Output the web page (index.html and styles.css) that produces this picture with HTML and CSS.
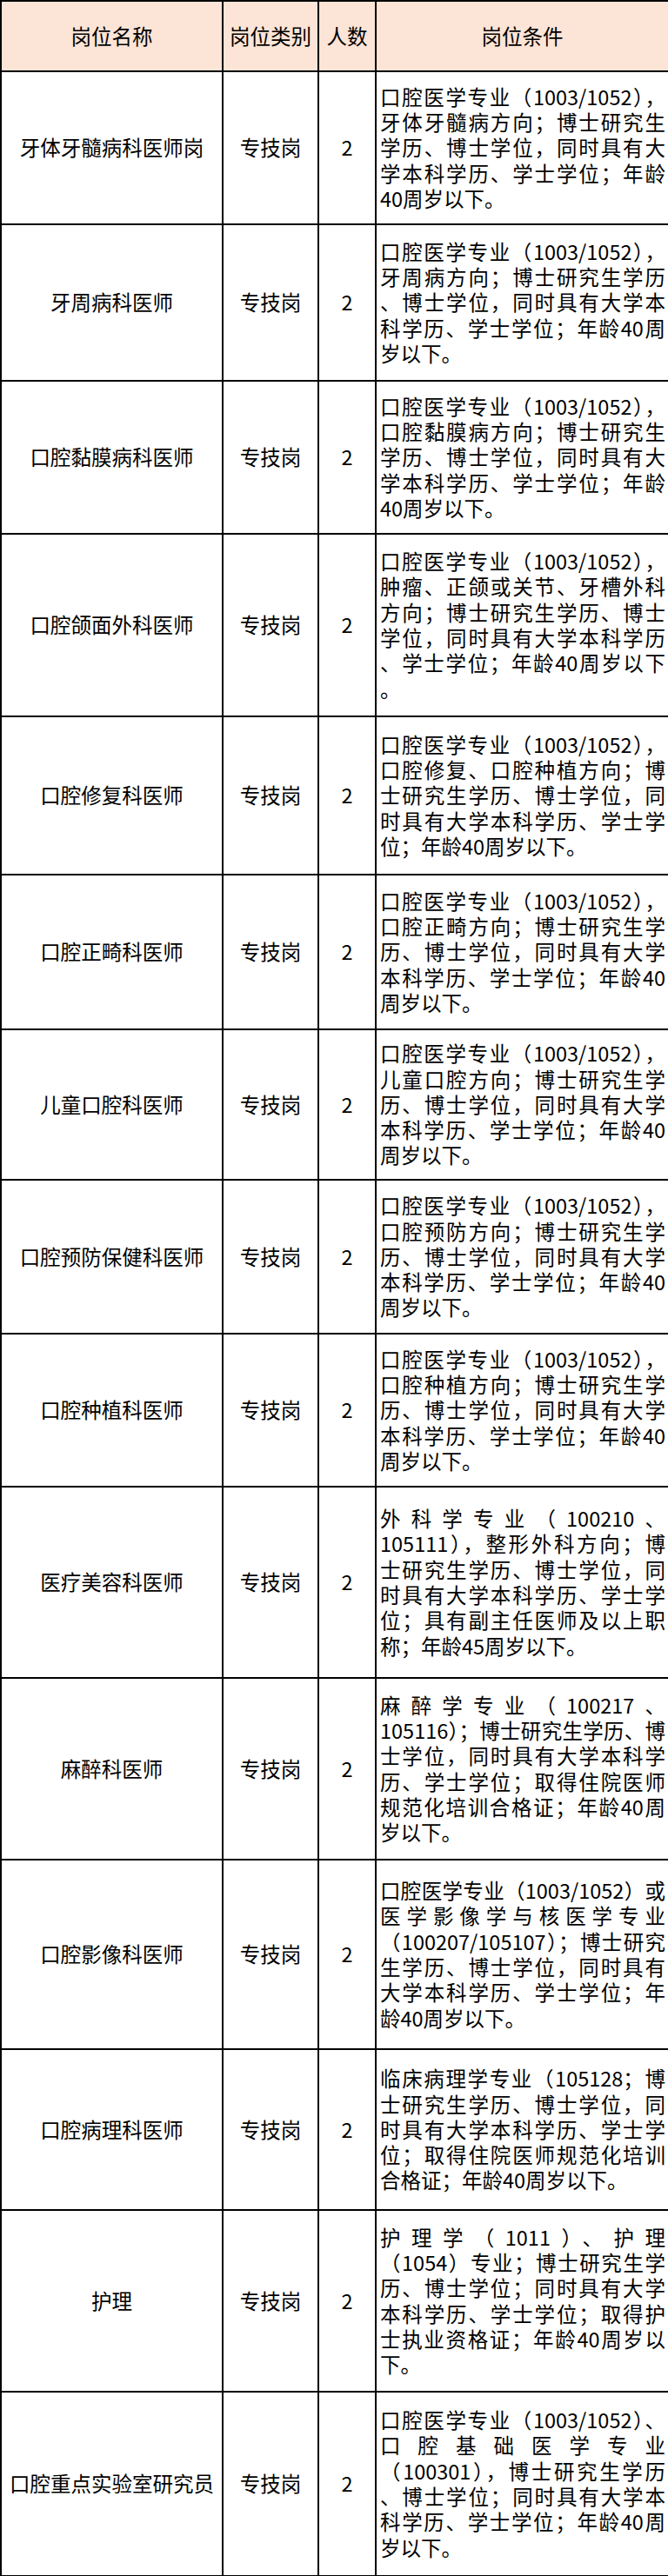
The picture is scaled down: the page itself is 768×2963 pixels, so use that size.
FILE: index.html
```html
<!DOCTYPE html>
<html lang="zh-CN">
<head>
<meta charset="utf-8">
<title>岗位表</title>
<link rel="stylesheet" href="styles.css">
</head>
<body>
<table class="jobs">
  <colgroup>
    <col class="c-name"><col class="c-type"><col class="c-num"><col class="c-req">
  </colgroup>
  <thead>
    <tr class="head"><th>岗位名称</th><th>岗位类别</th><th>人数</th><th>岗位条件</th></tr>
  </thead>
  <tbody>
    <tr style="height:176px"><td>牙体牙髓病科医师岗</td><td>专技岗</td><td>2</td><td class="req">
      <div class="ln">口腔医学专业（1003/1052），</div>
      <div class="ln">牙体牙髓病方向；博士研究生</div>
      <div class="ln">学历、博士学位，同时具有大</div>
      <div class="ln">学本科学历、学士学位；年龄</div>
      <div class="ln last">40周岁以下。</div></td></tr>
    <tr style="height:180px"><td>牙周病科医师</td><td>专技岗</td><td>2</td><td class="req">
      <div class="ln">口腔医学专业（1003/1052），</div>
      <div class="ln">牙周病方向；博士研究生学历</div>
      <div class="ln">、博士学位，同时具有大学本</div>
      <div class="ln">科学历、学士学位；年龄40周</div>
      <div class="ln last">岁以下。</div></td></tr>
    <tr style="height:176px"><td>口腔黏膜病科医师</td><td>专技岗</td><td>2</td><td class="req">
      <div class="ln">口腔医学专业（1003/1052），</div>
      <div class="ln">口腔黏膜病方向；博士研究生</div>
      <div class="ln">学历、博士学位，同时具有大</div>
      <div class="ln">学本科学历、学士学位；年龄</div>
      <div class="ln last">40周岁以下。</div></td></tr>
    <tr style="height:210px"><td>口腔颌面外科医师</td><td>专技岗</td><td>2</td><td class="req">
      <div class="ln">口腔医学专业（1003/1052），</div>
      <div class="ln">肿瘤、正颌或关节、牙槽外科</div>
      <div class="ln">方向；博士研究生学历、博士</div>
      <div class="ln">学位，同时具有大学本科学历</div>
      <div class="ln">、学士学位；年龄40周岁以下</div>
      <div class="ln last">。</div></td></tr>
    <tr style="height:182px"><td>口腔修复科医师</td><td>专技岗</td><td>2</td><td class="req">
      <div class="ln">口腔医学专业（1003/1052），</div>
      <div class="ln">口腔修复、口腔种植方向；博</div>
      <div class="ln">士研究生学历、博士学位，同</div>
      <div class="ln">时具有大学本科学历、学士学</div>
      <div class="ln last">位；年龄40周岁以下。</div></td></tr>
    <tr style="height:178px"><td>口腔正畸科医师</td><td>专技岗</td><td>2</td><td class="req">
      <div class="ln">口腔医学专业（1003/1052），</div>
      <div class="ln">口腔正畸方向；博士研究生学</div>
      <div class="ln">历、博士学位，同时具有大学</div>
      <div class="ln">本科学历、学士学位；年龄40</div>
      <div class="ln last">周岁以下。</div></td></tr>
    <tr style="height:173px"><td>儿童口腔科医师</td><td>专技岗</td><td>2</td><td class="req">
      <div class="ln">口腔医学专业（1003/1052），</div>
      <div class="ln">儿童口腔方向；博士研究生学</div>
      <div class="ln">历、博士学位，同时具有大学</div>
      <div class="ln">本科学历、学士学位；年龄40</div>
      <div class="ln last">周岁以下。</div></td></tr>
    <tr style="height:177px"><td>口腔预防保健科医师</td><td>专技岗</td><td>2</td><td class="req">
      <div class="ln">口腔医学专业（1003/1052），</div>
      <div class="ln">口腔预防方向；博士研究生学</div>
      <div class="ln">历、博士学位，同时具有大学</div>
      <div class="ln">本科学历、学士学位；年龄40</div>
      <div class="ln last">周岁以下。</div></td></tr>
    <tr style="height:176px"><td>口腔种植科医师</td><td>专技岗</td><td>2</td><td class="req">
      <div class="ln">口腔医学专业（1003/1052），</div>
      <div class="ln">口腔种植方向；博士研究生学</div>
      <div class="ln">历、博士学位，同时具有大学</div>
      <div class="ln">本科学历、学士学位；年龄40</div>
      <div class="ln last">周岁以下。</div></td></tr>
    <tr style="height:220px"><td>医疗美容科医师</td><td>专技岗</td><td>2</td><td class="req">
      <div class="ln">外科学专业（100210、</div>
      <div class="ln">105111），整形外科方向；博</div>
      <div class="ln">士研究生学历、博士学位，同</div>
      <div class="ln">时具有大学本科学历、学士学</div>
      <div class="ln">位；具有副主任医师及以上职</div>
      <div class="ln last">称；年龄45周岁以下。</div></td></tr>
    <tr style="height:209px"><td>麻醉科医师</td><td>专技岗</td><td>2</td><td class="req">
      <div class="ln">麻醉学专业（100217、</div>
      <div class="ln">105116）；博士研究生学历、博</div>
      <div class="ln">士学位，同时具有大学本科学</div>
      <div class="ln">历、学士学位；取得住院医师</div>
      <div class="ln">规范化培训合格证；年龄40周</div>
      <div class="ln last">岁以下。</div></td></tr>
    <tr style="height:218px"><td>口腔影像科医师</td><td>专技岗</td><td>2</td><td class="req">
      <div class="ln">口腔医学专业（1003/1052）或</div>
      <div class="ln">医学影像学与核医学专业</div>
      <div class="ln">（100207/105107）；博士研究</div>
      <div class="ln">生学历、博士学位，同时具有</div>
      <div class="ln">大学本科学历、学士学位；年</div>
      <div class="ln last">龄40周岁以下。</div></td></tr>
    <tr style="height:185px"><td>口腔病理科医师</td><td>专技岗</td><td>2</td><td class="req">
      <div class="ln">临床病理学专业（105128；博</div>
      <div class="ln">士研究生学历、博士学位，同</div>
      <div class="ln">时具有大学本科学历、学士学</div>
      <div class="ln">位；取得住院医师规范化培训</div>
      <div class="ln last">合格证；年龄40周岁以下。</div></td></tr>
    <tr style="height:209px"><td>护理</td><td>专技岗</td><td>2</td><td class="req">
      <div class="ln">护理学（1011）、护理</div>
      <div class="ln">（1054）专业；博士研究生学</div>
      <div class="ln">历、博士学位；同时具有大学</div>
      <div class="ln">本科学历、学士学位；取得护</div>
      <div class="ln">士执业资格证；年龄40周岁以</div>
      <div class="ln last">下。</div></td></tr>
    <tr style="height:212px"><td>口腔重点实验室研究员</td><td>专技岗</td><td>2</td><td class="req">
      <div class="ln">口腔医学专业（1003/1052）、</div>
      <div class="ln">口腔基础医学专业</div>
      <div class="ln">（100301），博士研究生学历</div>
      <div class="ln">、博士学位；同时具有大学本</div>
      <div class="ln">科学历、学士学位；年龄40周</div>
      <div class="ln last">岁以下。</div></td></tr>
  </tbody>
</table>
</body>
</html>
```

FILE: styles.css
```css
html, body {
  margin: 0;
  padding: 0;
  background: #ffffff;
}

body {
  font-family: "Noto Sans CJK SC", "Noto Sans", sans-serif;
  font-size: 23.5px;
  color: #000000;
}

.jobs {
  width: 768px;
  border-collapse: collapse;
  table-layout: fixed;
}

.c-name { width: 255px; }
.c-type { width: 110px; }
.c-num  { width: 66px; }
.c-req  { width: 337px; }

.jobs th,
.jobs td {
  border: 2px solid #000000;
  padding: 0 3px;
  text-align: center;
  vertical-align: middle;
  font-weight: normal;
  line-height: 29.3px;
  white-space: nowrap;
}

.head {
  height: 81px;
  background: #fce4d6;
}

.jobs td.req {
  text-align: left;
  padding: 0 3px 0 4px;
}

.ln {
  text-align: justify;
  text-align-last: justify;
  text-justify: inter-character;
  white-space: nowrap;
}

.ln.last {
  text-align-last: left;
}
```
